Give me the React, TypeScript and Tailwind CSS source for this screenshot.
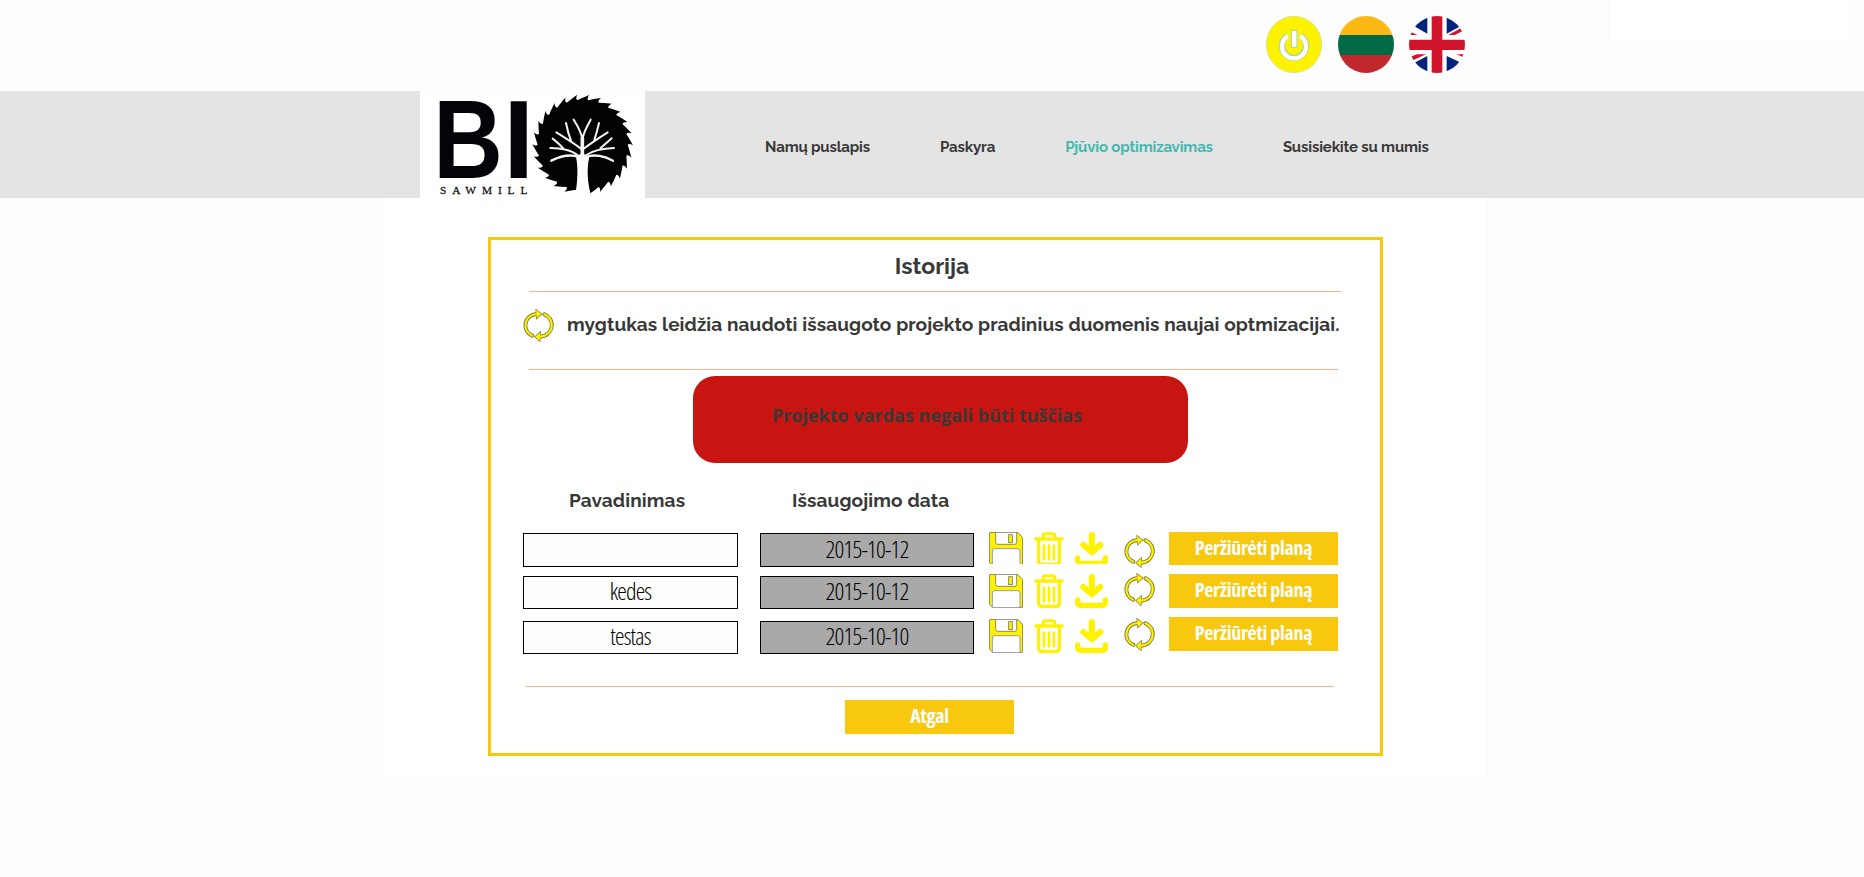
const raleway = "font-['Raleway','Lato',sans-serif] font-bold text-[#383838] whitespace-nowrap";
const condensed = "font-['Open_Sans',sans-serif] [font-stretch:75%] whitespace-nowrap leading-none";

function sawBlade(cx: number, cy: number, inner: number, outer: number, teeth: number) {
  const point = (r: number, a: number) =>
    `${(cx + r * Math.cos(a)).toFixed(1)} ${(cy + r * Math.sin(a)).toFixed(1)}`;
  const step = (Math.PI * 2) / teeth;
  let d = `M${point(inner, 0)}`;
  for (let i = 0; i < teeth; i++) {
    const a = i * step;
    d += `Q${point(inner + 6, a + step * 0.45)} ${point(outer, a + step * 1.05)}`;
    d += `Q${point(inner + 5, a + step * 0.85)} ${point(inner, a + step)}`;
  }
  return d + "Z";
}

function Logo() {
  return (
    <svg viewBox="30 18 675 321" className="h-[107px] w-[225px] shrink-0 overflow-visible">
      <path d="M30 18h675v321H30z" fill="#fff" />
      <g fontFamily="Liberation Sans, sans-serif" fontWeight="700" fontSize="334" fill="#05030a">
        <text x="70" y="278" textLength="209" lengthAdjust="spacingAndGlyphs">B</text>
        <text x="280" y="278">I</text>
      </g>
      <text x="90" y="326" fontFamily="Liberation Serif, serif" fontSize="34" fill="#111" stroke="#111" strokeWidth="0.800" textLength="262" lengthAdjust="spacing">
        SAWMILL
      </text>
      <path d={sawBlade(518, 179.5, 135, 151, 26)} fill="#020202" />
      <path d="M495 335C503 290 505 250 498 215L516 204L538 215C529 255 533 295 544 335Z" fill="#fff" />
      <g fill="none" stroke="#f4f4f4" strokeLinecap="round" strokeLinejoin="round">
        <path strokeWidth="11" d="M517 218V160" />
        <path strokeWidth="6" d="M517 165C519 145 530 125 542 104M517 163C514 140 502 122 491 104" />
        <path strokeWidth="6" d="M514 192C500 180 468 160 439 142M484 170C478 155 472 135 468 114" />
        <path strokeWidth="6" d="M520 192C535 180 565 160 593 142M552 168C558 150 563 132 567 114" />
        <path strokeWidth="6" d="M505 212C480 192 450 190 421 189M460 190C450 180 440 170 428 161" />
        <path strokeWidth="6" d="M529 210C555 192 585 190 612 189M571 190C583 180 594 170 605 160" />
        <path strokeWidth="7" d="M506 216C480 206 450 214 424 227M528 216C552 206 585 214 609 227" />
      </g>
    </svg>
  );
}

function PowerIcon() {
  return (
    <svg viewBox="48 48 168 171" className="h-[57px] w-[56px]">
      <ellipse cx="132" cy="133.500" rx="83" ry="84.500" fill="#fff200" stroke="#c3e08a" strokeWidth="2" />
      <path d="M113 107A36 36 0 1 0 151 107" fill="none" stroke="#a9d3a0" strokeWidth="19" />
      <path d="M114 108A36 36 0 1 0 150 108" fill="none" stroke="#fff" strokeWidth="13" />
      <rect x="121" y="88" width="23" height="57" fill="#fff200" />
      <rect x="124" y="91" width="17" height="51" fill="#fff" stroke="#a9d3a0" strokeWidth="3" />
    </svg>
  );
}

function LithuanianFlag() {
  return (
    <span className="flex h-[57px] w-[56px] flex-col overflow-hidden rounded-[50%]">
      <span className="h-[19px] bg-[#fdb913]" />
      <span className="h-5 bg-[#006a44]" />
      <span className="h-[18px] bg-[#c1272d]" />
    </span>
  );
}

function BritishFlag() {
  return (
    <svg viewBox="477 48 168 171" className="h-[57px] w-[56px] rounded-[50%]">
      <path fill="#fff" d="M477 48h168v171H477z" />
      <path fill="#00247d" d="M532 48V101L490 77V48ZM590 48V101L634 77V48ZM532 168V219H490V190ZM590 168V219H640V191Z" />
      <path fill="#cf142b" d="M545 48h32v171h-32zM477 119h168v31H477zM595 105L632 85L645 80V90L614 105ZM477 94L503 105H477ZM477 172L502 163H528L489 181H477ZM620 163H645V174Z" />
    </svg>
  );
}

function RefreshIcon({ className }: { className: string }) {
  const arcs = "M491 239C459 224 466 177 505 174M528 175C562 190 555 239 515 242";
  const heads = "M503 162L519 174L505 187ZM515 229L500 242L514 255Z";
  return (
    <svg viewBox="464 159 92 99" className={className} fill="none" strokeLinecap="round">
      <path d={arcs} stroke="#7d7b3c" strokeWidth="12" />
      <path d={heads} stroke="#7d7b3c" strokeWidth="4" fill="#7d7b3c" />
      <path d={arcs} stroke="#fff200" strokeWidth="6.500" />
      <path d={heads} fill="#fff200" />
    </svg>
  );
}

function SaveIcon({ className }: { className: string }) {
  return (
    <svg viewBox="57 162 102 102" preserveAspectRatio="xMidYMin slice" className={className}>
      <path d="M63 163H143L158 179V258Q158 263 153 263H69L58 252V168Q58 163 63 163Z" fill="#fff200" stroke="#6f6d35" strokeWidth="2.500" />
      <path d="M77 163H140V193Q140 199 134 199H83Q77 199 77 193Z" fill="#fff" stroke="#77756a" strokeWidth="2.500" />
      <rect x="116" y="170" width="11" height="24" fill="#fff200" stroke="#77756a" strokeWidth="2.500" />
      <path d="M67 263V219Q67 212 74 212H143Q150 212 150 219V263Z" fill="#fff" stroke="#9a98a6" strokeWidth="3" />
    </svg>
  );
}

function TrashIcon({ className }: { className: string }) {
  return (
    <svg viewBox="192 162 90 102" preserveAspectRatio="xMidYMin slice" className={className} fill="none" stroke="#fff200" strokeLinecap="round">
      <path strokeWidth="11" d="M198 183H276" />
      <path strokeWidth="9" d="M220 180V172Q220 167 226 167H248Q254 167 254 172V180" />
      <path strokeWidth="10" d="M206 187V250Q206 259 215 259H259Q268 259 268 250V187" />
      <path strokeWidth="8" d="M222 203V244M237 203V244M252 203V244" />
    </svg>
  );
}

function DownloadIcon({ className }: { className: string }) {
  return (
    <svg viewBox="315 162 99 102" preserveAspectRatio="xMidYMin slice" className={className} fill="none" stroke="#fff200" strokeLinecap="round">
      <path strokeWidth="18" strokeLinecap="butt" d="M365.500 170V218" />
      <path strokeWidth="18" d="M365.500 171V190" />
      <path strokeWidth="18" strokeLinejoin="round" d="M340 201L365.500 223L391 201" />
      <path strokeWidth="16" strokeLinejoin="round" d="M323 240V246Q323 256 333 256H396Q406 256 406 246V240" />
    </svg>
  );
}

const rows = [
  { name: "", date: "2015-10-12", row: "h-[42px]", field: "mt-px h-[34px]", icon: "h-8", refresh: "mt-[3px]", button: "h-[33px] pb-px" },
  { name: "kedes", date: "2015-10-12", row: "h-[43px]", field: "mt-[2px] h-[33px]", icon: "h-[34px]", refresh: "-mt-px", button: "h-[34px] pb-[3px]" },
  { name: "testas", date: "2015-10-10", row: "h-[37px]", field: "mt-1 h-[33px]", icon: "mt-[2px] h-[34px]", refresh: "mt-px", button: "h-[34px] pb-[3px]" },
];

const actionButton = `${condensed} flex shrink-0 w-[169px] items-center justify-center bg-[#f8c80f] text-[20px] font-bold tracking-[-0.3px] text-white`;
const fieldBox = `${condensed} flex shrink-0 items-center justify-center border border-black pb-[3px] text-[24px] font-light tracking-[-0.8px] text-black`;

export default function App() {
  return (
    <div className="flex h-[877px] w-[1864px] flex-col overflow-hidden bg-[#fdfdfd]">
      <div className="flex h-[91px] shrink-0 items-start pl-[1266px]">
        <div className="mt-4 flex gap-4">
          <PowerIcon />
          <LithuanianFlag />
          <span className="-ml-px flex"><BritishFlag /></span>
        </div>
        <div className="ml-[145px] h-10 w-[240px] bg-white" />
      </div>

      <header className="flex h-[107px] shrink-0 bg-[#e4e4e4] pl-[420px]">
        <Logo />
        <nav className={`${raleway} ml-[120px] mt-[46px] flex gap-[70px] text-[15px] leading-5 tracking-[-0.16px]`}>
          <a>Namų puslapis</a>
          <a>Paskyra</a>
          <a className="text-[#43b8b0]">Pjūvio optimizavimas</a>
          <a>Susisiekite su mumis</a>
        </nav>
      </header>

      <main className="ml-[383px] h-[580px] w-[1103px] shrink-0 bg-white pl-[105px] pt-[39px]">
        <section className="h-[519px] w-[895px] border-[3px] border-[#f8c80f] pl-8">
          <h1 className={`${raleway} ml-[3px] mt-3 w-[812px] text-center text-[23px] leading-7`}>Istorija</h1>
          <div className="ml-[6px] mt-[11px] h-px w-[812px] bg-[#f0b58a]" />
          <div className="flex h-[77px]">
            <RefreshIcon className="mt-[17px] h-[33px] w-[31px] shrink-0" />
            <p className={`${raleway} ml-[13px] mt-5 text-[19px] leading-6 tracking-[0.1px]`}>
              mygtukas leidžia naudoti išsaugoto projekto pradinius duomenis naujai optmizacijai.
            </p>
          </div>
          <div className="ml-[6px] h-px w-[809px] bg-[#f0b58a]" />
          <div className="ml-[170px] mt-[6px] h-[87px] w-[495px] rounded-[22px] bg-[#c81512] pr-[27px] pt-[27px]">
            <p className="text-center font-['Open_Sans',sans-serif] text-[18px] font-bold leading-6 text-[#3b3735]">
              Projekto vardas negali būti tuščias
            </p>
          </div>
          <div className={`${raleway} mt-[25px] flex text-[19px] leading-6 tracking-[0.13px]`}>
            <span className="ml-[46px] w-[223px]">Pavadinimas</span>
            <span>Išsaugojimo data</span>
          </div>
          <div className="mt-5">
            {rows.map((r) => (
              <div key={r.name} className={`flex items-start ${r.row}`}>
                <div className={`${fieldBox} w-[215px] bg-[#fdfdfd] ${r.field}`}>{r.name}</div>
                <div className={`${fieldBox} ml-[22px] w-[214px] bg-[#a9a9a9] ${r.field}`}>{r.date}</div>
                <SaveIcon className={`ml-[15px] w-[34px] shrink-0 ${r.icon}`} />
                <TrashIcon className={`ml-[11px] w-[30px] shrink-0 ${r.icon}`} />
                <DownloadIcon className={`ml-[11px] w-[33px] shrink-0 ${r.icon}`} />
                <RefreshIcon className={`ml-4 h-[33px] w-[31px] shrink-0 ${r.refresh}`} />
                <div className={`${actionButton} ml-[14px] ${r.button}`}>Peržiūrėti planą</div>
              </div>
            ))}
          </div>
          <div className="ml-[3px] mt-8 h-px w-[808px] bg-[#f0b58a]" />
          <div className={`${actionButton} ml-[322px] mt-[13px] h-[34px] pb-[3px]`}>Atgal</div>
        </section>
      </main>
    </div>
  );
}
